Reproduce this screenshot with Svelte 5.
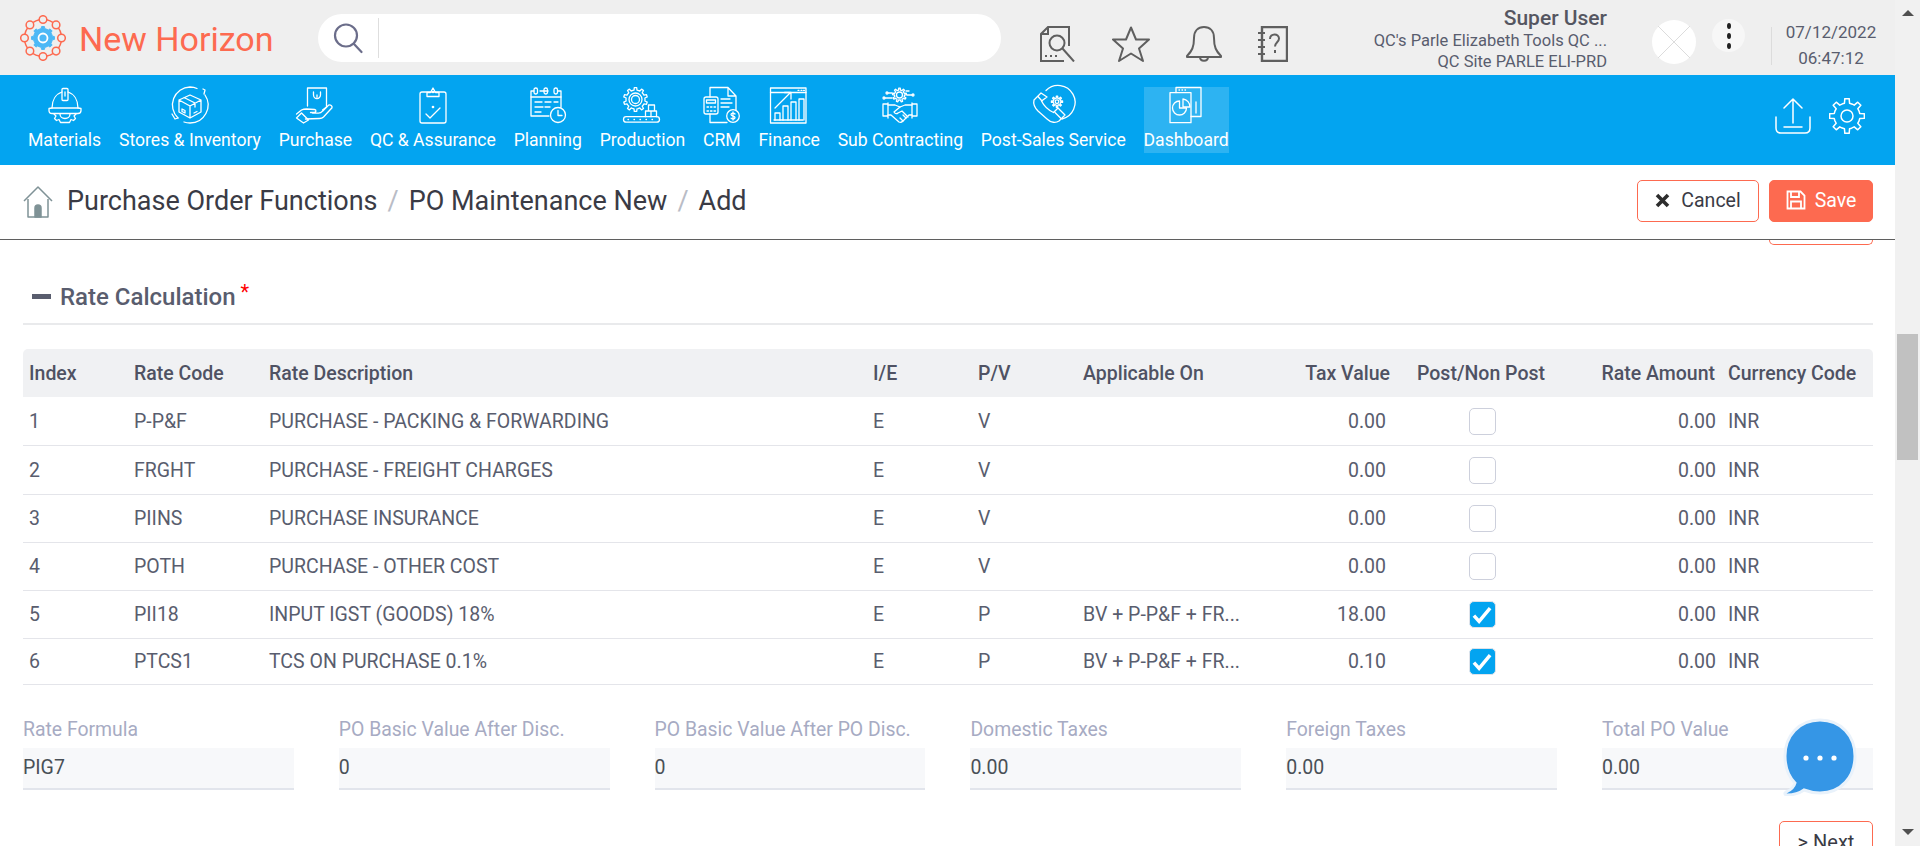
<script>
  function gear(cx, cy, r1, r2, n) {
    let d = '';
    const step = (Math.PI * 2) / n;
    for (let i = 0; i < n; i++) {
      const a = i * step - Math.PI / 2;
      const w = step / 4.4;
      const pts = [
        [r1, a - step / 2 + w * 0.2],
        [r1, a - w * 1.1],
        [r2, a - w * 0.7],
        [r2, a + w * 0.7],
        [r1, a + w * 1.1]
      ];
      pts.forEach(([r, t], j) => {
        d += (i === 0 && j === 0 ? 'M' : 'L') + (cx + r * Math.cos(t)).toFixed(2) + ' ' + (cy + r * Math.sin(t)).toFixed(2) + ' ';
      });
    }
    return d + 'Z';
  }

  const nav = [
    { label: 'Materials', svg: `<path d="M9 21C9 13 13 7 19 5M25 5c6 2 10 8 10 16"/><rect x="19" y="1.500" width="6" height="12" rx="1"/><path d="M22 5v4"/><path d="M6 21.500l3-.5h26l3 .5v2c0 2-1 3-3 3H9c-2 0-3-1-3-3z"/><path d="M11 27l2 2-1.500 2.500 2 2 2.500-1 1.500 3h9l1.500-3 2.500 1 2-2-1.500-2.500 2-2"/><path d="M17 27a5 4.500 0 0 0 10 0"/>` },
    { label: 'Stores & Inventory', svg: `<path d="M10 31A18 18 0 0 1 22 0c3 0 5 .5 7 1.500M37 8a18 18 0 0 1-15 28c-2 0-4-.3-6-1"/><path d="M35 2l2 1-1 4M4 27l3 5 3-1"/><path d="M22 8l11 5v12l-11 6-11-6V13zM11 13l11 6 11-6M22 19v12M16 10.500l11 5.500v4"/><path d="M14 22l3 1.500v2.500l-3-1.500zM26 26l3-1.500"/>` },
    { label: 'Purchase', svg: `<g transform="translate(-2.500 0)"><path d="M17 19V1h19v19l-4 3"/><path d="M23 5v3a3.500 3.500 0 0 0 7 0V5M26.500 8v2"/><path d="M6 27l5-4c2-1 3-1 5-1l8 .5c2 .2 2 3-.5 3H20M22 26l6 .2c2 0 3-.7 4-2l6-6c2-1 4 1 3.500 2.500L33 30c-1 1-2 1.500-4 1.500l-14 .5"/><path d="M6 31l5-5 7 7-5 3z"/></g>` },
    { label: 'QC & Assurance', svg: `<rect x="9" y="5" width="26" height="31" rx="2"/><path d="M16 9.500V5.500h3.500L22 1l2.500 4.500H28v4z"/><circle cx="22" cy="5" r=".6"/><path d="M15 27l4 4 10-10"/><circle cx="22" cy="20" r=".7"/>` },
    { label: 'Planning', svg: `<path d="M14 4h8M8 4H5v25h18"/><path d="M32 4h3v16"/><rect x="8" y="1" width="3.500" height="6" rx="1.700"/><rect x="18" y="1" width="3.500" height="6" rx="1.700"/><rect x="28" y="1" width="3.500" height="6" rx="1.700"/><path d="M5 10h30M9 15h7M19 15h6M28 15h4M9 20h8M19 20h5M9 25h6"/><circle cx="32" cy="28" r="7.500"/><path d="M32 23.500v5h4"/>` },
    { label: 'Production', svg: `<path d="${gear(15.500, 12.500, 9.500, 12, 10)}"/><circle cx="15.500" cy="12.500" r="6.500"/><circle cx="15.500" cy="12.500" r="4"/><rect x="3.500" y="29.700" width="36" height="5.500" rx="2.700"/><path d="M8 32.500h.5M14 32.500h.5M20 32.500h.5M26 32.500h.5M32 32.500h.5"/><path d="M25.500 29.700V24h5.500v5.700M31 29.700V24h5.500v5.700M28.500 24v-6h6v6"/>` },
    { label: 'CRM', svg: `<path d="M10 10V0.500h18L36 9v14M28 .5V9h8M10 27v8.500h17"/><rect x="4" y="10" width="14" height="17" rx="2"/><path d="M6.500 13h9v3h-9zM7 20h1.500M10.500 20h1.500M14 20h1.500M7 24h1.500M10.500 24h1.500M14 24h1.500"/><path d="M21 12h9M21 16h11M21 20h8"/><circle cx="33" cy="29" r="6.300"/><path d="M35 27c-1-1.300-4-1.300-4 .6 0 1.900 4 1 4 3 0 1.800-3 1.800-4 .6M33 25v8"/>` },
    { label: 'Finance', svg: `<rect x="3.500" y="1" width="35.500" height="35"/><path d="M3.500 5.500h35.500M31 3.300h1M34 3.300h1M36.500 3.300h1M7 33h29"/><path d="M8 33v-7h5v7M16 33V19h5v14M24 33V15h5v18M32 33V12h5v21"/><path d="M8 21l15-15M17.500 5.500H24V12"/>` },
    { label: 'Sub Contracting', svg: `<path d="${gear(21.500, 8, 5, 7, 9)}"/><circle cx="21.500" cy="8" r="3"/><path d="M14 6H10M14 11H7M29 8h5M28 4h3"/><circle cx="9" cy="6" r="1"/><circle cx="6" cy="11" r="1"/><circle cx="35" cy="8" r="1"/><path d="M5 17v12M10 16v15M5 17h5M5 29h5M34 16v15M39 17v12M34 17h5M34 29h5"/><path d="M10 18h7l5 2 5-2h7M10 28h3l8 7c2 1 3 0 4-1l6-6h3"/><path d="M22 20l-6 5c1 2 3 2 4 1l4-2 6 6M25 28l3 3M22 31l3 3"/>` },
    { label: 'Post-Sales Service', svg: `<path d="M15 3.500A17 17 0 1 1 31 32"/><path d="M10 6L3 13C2 17 4 21 7 24L16 32C20 36 25 36 28 34L34 28 27 21 22.500 25.500C17 23 13 19 10.500 14L16 10Z"/><path d="M7 9.500L11 14M24 25.500l6 6"/><path d="${gear(26, 14.700, 3.600, 5.600, 8)}"/><circle cx="26" cy="14.700" r="1.800"/>` },
    { label: 'Dashboard', active: true, svg: `<path d="M12 5.500V.5h25v29h-10"/><path d="M15 3h.5M18 3h.5M21 3h.5"/><rect x="6" y="5.700" width="21" height="30"/><path d="M15.500 14a7 7 0 1 0 7 7h-7z"/><path d="M19 12a8 8 0 0 1 7 8h-7z"/><path d="M32 15v11"/>` }
  ];

  const rows = [
    ['1', 'P-P&F', 'PURCHASE - PACKING & FORWARDING', 'E', 'V', '', '0.00', false],
    ['2', 'FRGHT', 'PURCHASE - FREIGHT CHARGES', 'E', 'V', '', '0.00', false],
    ['3', 'PIINS', 'PURCHASE INSURANCE', 'E', 'V', '', '0.00', false],
    ['4', 'POTH', 'PURCHASE - OTHER COST', 'E', 'V', '', '0.00', false],
    ['5', 'PII18', 'INPUT IGST (GOODS) 18%', 'E', 'P', 'BV + P-P&F + FR...', '18.00', true],
    ['6', 'PTCS1', 'TCS ON PURCHASE 0.1%', 'E', 'P', 'BV + P-P&F + FR...', '0.10', true]
  ];

  const fields = [
    ['Rate Formula', 'PIG7'],
    ['PO Basic Value After Disc.', '0'],
    ['PO Basic Value After PO Disc.', '0'],
    ['Domestic Taxes', '0.00'],
    ['Foreign Taxes', '0.00'],
    ['Total PO Value', '0.00']
  ];

  const logoDots = Array.from({ length: 8 }, (_, i) => {
    const a = (i * Math.PI) / 4;
    return [23 + 18.500 * Math.cos(a), 23 + 18.500 * Math.sin(a)];
  });
</script>

<div class="app">
  <div class="main">
    <header class="top">
      <svg class="logo" width="46" height="46" viewBox="0 0 46 46">
        <circle cx="23" cy="23" r="18.500" fill="none" stroke="#fd6a50" stroke-width="1.500" />
        {#each logoDots as [x, y]}
          <circle cx={x} cy={y} r="3.800" fill="#efefef" stroke="#fd6a50" stroke-width="1.500" />
        {/each}
        <path d={gear(23, 23, 9.500, 11.500, 8)} fill="#4cb8f6" stroke="#4cb8f6" stroke-linejoin="round" />
        <circle cx="23" cy="23" r="4.500" fill="#4cb8f6" stroke="#fff" stroke-width="1.800" />
      </svg>
      <div class="brand">New Horizon</div>
      <div class="search">
        <svg width="32" height="32" viewBox="0 0 32 32" fill="none" stroke="#6b6d8a" stroke-width="2.200" stroke-linecap="round">
          <circle cx="14" cy="13.500" r="11" />
          <path d="M22 22l7.500 8" />
        </svg>
        <span class="search-div"></span>
      </div>
      <div class="tools">
        <svg width="36" height="36" viewBox="0 0 36 36" fill="none" stroke="#5f5f5f" stroke-width="2">
          <path d="M29 20V1H8L1 8v27h23" />
          <path d="M8 1v7H1" />
          <circle cx="17" cy="17" r="7.500" />
          <path d="M22.500 22.500L34 35.500" />
          <path d="M5 30h2M10 30h2M15 30h2" />
        </svg>
        <svg width="38" height="36" viewBox="0 0 38 36" fill="none" stroke="#5f5f5f" stroke-width="2" stroke-linejoin="round">
          <path d="M19 1.500l5 12h13l-10 9 4 12.500-12-7.500L7 35l4-12.500-10-9h13z" />
        </svg>
        <svg width="36" height="36" viewBox="0 0 36 36" fill="none" stroke="#5f5f5f" stroke-width="2" stroke-linejoin="round">
          <path d="M18 1c-6 0-10 4-10 11 0 9-2 13-7 18v1h34v-1c-5-5-7-9-7-18 0-7-4-11-10-11z" />
          <path d="M14 31c0 5 8 5 8 0" />
        </svg>
        <svg width="30" height="36" viewBox="0 0 30 36" fill="none" stroke="#5f5f5f" stroke-width="2">
          <path d="M4 1h25v34H4z" stroke-width="2.400" />
          <path d="M0 7h7M0 14h7M0 21h7M0 28h7" />
          <path d="M12 13c0-6 9-6 9-.5 0 3.500-4 4-4 8M17 24v3" />
        </svg>
      </div>
      <div class="user">
        <div class="uname">Super User</div>
        <div class="uorg">QC's Parle Elizabeth Tools QC ...</div>
        <div class="uorg">QC Site PARLE ELI-PRD</div>
      </div>
      <div class="avatar">
        <svg width="44" height="44" viewBox="0 0 44 44" fill="none" stroke="#dcdcdc">
          <path d="M6 6l32 32M38 6L6 38" />
        </svg>
      </div>
      <div class="dots"><i></i><i></i><i></i></div>
      <span class="vdiv"></span>
      <div class="clock">
        <div>07/12/2022</div>
        <div>06:47:12</div>
      </div>
    </header>

    <nav class="nav">
      {#each nav as item}
        <div class="nav-item" class:active={item.active}>
          <svg class="nav-icon" width="44" height="36" viewBox="0 0 44 36" fill="none" stroke="#fff" stroke-width="1.300" stroke-linecap="round" stroke-linejoin="round">
            {@html item.svg}
          </svg>
          <span>{item.label}</span>
        </div>
      {/each}
      <div class="nav-right">
        <svg width="36" height="36" viewBox="0 0 36 36" fill="none" stroke="#fff" stroke-width="1.500" stroke-linecap="round" stroke-linejoin="round">
          <path d="M18 25V2M9 10l9-9 9 9" />
          <path d="M1 19v11c0 3 2 5 5 5h24c3 0 5-2 5-5V19" />
          <path d="M9 29h18" />
        </svg>
        <svg width="36" height="36" viewBox="0 0 36 36" fill="none" stroke="#fff" stroke-width="1.500" stroke-linejoin="round">
          <path d={gear(18, 18, 13, 17.500, 8)} />
          <circle cx="18" cy="18" r="6" />
        </svg>
      </div>
    </nav>

    <div class="crumbs">
      <svg width="32" height="32" viewBox="0 0 32 32" fill="none" stroke="#7f9296" stroke-width="1.500" stroke-linejoin="round">
        <path d="M2 15L16 1l14 14" />
        <path d="M6 13v18h20V13" />
        <path d="M13 31v-9a3 3 0 0 1 6 0v9z" fill="#7f9296" />
      </svg>
      <span class="crumb">Purchase Order Functions</span>
      <span class="sep">/</span>
      <span class="crumb">PO Maintenance New</span>
      <span class="sep">/</span>
      <span class="crumb">Add</span>
      <div class="actions">
        <button class="btn ghost">
          <svg width="15" height="15" viewBox="0 0 15 15" stroke="#2d2d2d" stroke-width="3.600">
            <path d="M2 2l11 11M13 2L2 13" />
          </svg>
          Cancel
        </button>
        <button class="btn solid">
          <svg width="20" height="20" viewBox="0 0 20 20" fill="none" stroke="#fff" stroke-width="1.800">
            <path d="M1.500 1.500h13l4 4v13h-17z" />
            <path d="M5 1.500v5.500h8V1.500M5 18.500v-7h10v7" />
          </svg>
          Save
        </button>
      </div>
    </div>

    <section class="content">
      <div class="stub"></div>
      <h2 class="section"><span class="dash"></span>Rate Calculation<sup>*</sup></h2>

      <table>
        <colgroup>
          <col style="width:105px" /><col style="width:135px" /><col style="width:604px" /><col style="width:105px" /><col style="width:105px" />
          <col style="width:168px" /><col style="width:152px" /><col style="width:170px" /><col style="width:155px" /><col style="width:151px" />
        </colgroup>
        <thead>
          <tr>
            <th>Index</th><th>Rate Code</th><th>Rate Description</th><th>I/E</th><th>P/V</th><th>Applicable On</th>
            <th class="r">Tax Value</th><th class="c">Post/Non Post</th><th class="r">Rate Amount</th><th>Currency Code</th>
          </tr>
        </thead>
        <tbody>
          {#each rows as r}
            <tr>
              <td>{r[0]}</td><td>{r[1]}</td><td>{r[2]}</td><td>{r[3]}</td><td>{r[4]}</td><td>{r[5]}</td>
              <td class="r v">{r[6]}</td>
              <td class="c">
                <span class="check" class:on={r[7]}>
                  {#if r[7]}
                    <svg width="22" height="20" viewBox="0 0 19 17" fill="none" stroke="#fff" stroke-width="3"><path d="M2.500 9l4.500 5 9.500-11.500" /></svg>
                  {/if}
                </span>
              </td>
              <td class="r v">0.00</td>
              <td>INR</td>
            </tr>
          {/each}
        </tbody>
      </table>

      <div class="fields">
        {#each fields as [label, value]}
          <div class="field">
            <div class="flabel">{label}</div>
            <div class="fvalue">{value}</div>
          </div>
        {/each}
      </div>

      <div class="next-row">
        <button class="btn ghost next">&gt; Next</button>
      </div>
    </section>

    <svg class="chat" width="76" height="78" viewBox="0 0 76 78">
      <path d="M38 2C17 2 3 18 3 38c0 12 4 21 10 27-1 4-4 7-9 9-2 1-1 3 1 3 7 0 13-2 17-5 5 2 10 3 16 3 21 0 35-16 35-37C73 18 59 2 38 2z" fill="#3596e6" stroke="#e9f2fb" stroke-width="3" />
      <circle cx="24" cy="40" r="2.600" fill="#fff" /><circle cx="38" cy="40" r="2.600" fill="#fff" /><circle cx="52" cy="40" r="2.600" fill="#fff" />
    </svg>
  </div>

  <div class="scrollbar">
    <span class="arrow up"></span>
    <div class="track"><div class="thumb"></div></div>
    <span class="arrow down"></span>
  </div>
</div>

<style>
  :global(body) {
    margin: 0;
    font-family: Roboto, "Liberation Sans", sans-serif;
    background: #fff;
  }
  .app {
    display: flex;
    width: 1920px;
    height: 846px;
    overflow: hidden;
  }
  .main {
    position: relative;
    width: 1895px;
    flex: none;
    overflow: hidden;
  }
  .top {
    display: flex;
    align-items: flex-start;
    height: 75px;
    background: #efefef;
    padding-left: 20px;
    box-sizing: border-box;
  }
  .logo { margin-top: 15px; flex: none; }
  .brand {
    margin-left: 13px;
    width: 193px;
    font-size: 34px;
    line-height: 75px;
    padding-top: 2px;
    color: #fd6a50;
    white-space: nowrap;
  }
  .search {
    margin: 14px 0 0 46px;
    width: 683px;
    height: 48px;
    border-radius: 24px;
    background: #fff;
    display: flex;
    align-items: center;
    padding-left: 14px;
    box-sizing: border-box;
  }
  .search-div { width: 1px; height: 40px; background: #dedede; margin-left: 14px; }
  .tools {
    margin: 26px 0 0 39px;
    display: flex;
    gap: 36px;
  }
  .user {
    width: 319px;
    text-align: right;
    color: #595d6e;
    padding-top: 6px;
    white-space: nowrap;
  }
  .uname { font-size: 21px; font-weight: 500; line-height: 25px; color: #555661; }
  .uorg { font-size: 16.500px; line-height: 20.500px; }
  .avatar {
    margin: 20px 0 0 45px;
    width: 44px;
    height: 44px;
    border-radius: 50%;
    background: #fff;
    flex: none;
  }
  .dots {
    margin: 19px 0 0 16px;
    width: 33px;
    height: 33px;
    border-radius: 50%;
    background: #f7f7f7;
    display: flex;
    flex-direction: column;
    align-items: center;
    justify-content: center;
    gap: 4px;
    flex: none;
  }
  .dots i { width: 4px; height: 6px; border-radius: 50%; background: #222; }
  .vdiv { margin: 27px 0 0 26px; width: 1px; height: 38px; background: #dcdcdc; }
  .clock {
    flex: 1;
    text-align: center;
    font-size: 17px;
    line-height: 26px;
    color: #595d6e;
    padding: 19px 5px 0 0;
  }
  .nav {
    display: flex;
    height: 90px;
    background: #03a4f0;
    padding: 12px 30px 0 28px;
    box-sizing: border-box;
    gap: 17.750px;
  }
  .nav-item {
    display: flex;
    flex-direction: column;
    align-items: center;
    height: 66px;
    color: #fff;
    font-size: 17.600px;
    white-space: nowrap;
  }
  .nav-item.active { background: rgba(255, 255, 255, 0.17); }
  .nav-item span { line-height: 24px; margin-top: 5px; }
  .nav-icon { flex: none; margin: 0 -4px; overflow: visible; }
  .nav-right {
    margin-left: auto;
    display: flex;
    gap: 18px;
    padding-top: 11px;
  }
  .crumbs {
    display: flex;
    align-items: center;
    height: 75px;
    padding: 0 22px 2px 22px;
    box-sizing: border-box;
    border-bottom: 1px solid #5f5f5f;
    background: #fff;
  }
  .crumb { font-size: 27px; color: #3a3b45; white-space: nowrap; }
  .crumbs > svg { margin-right: 13px; margin-top: 2px; }
  .sep { font-size: 27px; color: #b9bcc6; margin: 0 10px; }
  .actions { margin-left: auto; display: flex; gap: 10px; }
  .btn {
    font-family: inherit;
    font-size: 19.500px;
    height: 42px;
    border-radius: 5px;
    display: inline-flex;
    align-items: center;
    justify-content: center;
    gap: 11px;
    box-sizing: border-box;
    padding: 0 0 2px;
  }
  .ghost { background: #fff; border: 1px solid #fd6a50; color: #3a3b45; width: 122px; }
  .solid { background: #fd6a50; border: 1px solid #fd6a50; color: #fff; width: 104px; gap: 9px; }
  .content { padding: 0 22px 0 23px; background: #fff; }
  .stub {
    margin-left: auto;
    width: 104px;
    height: 5px;
    border: 1px solid #fd6a50;
    border-top: 0;
    border-radius: 0 0 5px 5px;
    box-sizing: border-box;
  }
  .section {
    display: flex;
    align-items: center;
    margin: 0;
    height: 80px;
    border-bottom: 2px solid #e9eaec;
    box-sizing: border-box;
    padding: 28px 0 3px 9px;
    font-size: 24px;
    font-weight: 500;
    color: #595d6e;
  }
  .dash { width: 19px; height: 5px; background: #595d6e; margin-right: 9px; }
  .section sup { color: #f00; font-size: 20px; line-height: 1; margin: -10px 0 0 5px; font-weight: 400; }
  table {
    table-layout: fixed;
    width: 1850px;
    border-collapse: separate;
    border-spacing: 0;
    margin-top: 24px;
    font-size: 19.500px;
    color: #595d6e;
  }
  th {
    height: 48px;
    background: #f0f1f3;
    font-weight: 500;
    text-align: left;
    padding: 0 6px;
    color: #4f5263;
    white-space: nowrap;
    overflow: visible;
  }
  th:first-child { border-radius: 5px 0 0 0; }
  th:last-child { border-radius: 0 5px 0 0; }
  td {
    height: 48px;
    padding: 0 6px;
    border-bottom: 1px solid #e4e5ea;
    box-sizing: border-box;
    white-space: nowrap;
  }
  tbody tr:nth-child(1) td, tbody tr:nth-child(2) td { height: 49px; }
  tbody tr:last-child td { height: 46px; }
  .r { text-align: right; }
  .v { padding-right: 11px; }
  .r:not(.v) { padding-right: 7px; }
  td.v:nth-child(9) { padding-right: 6px; }
  th:nth-child(9) { padding-right: 4px; }
  th.c { padding-right: 8px; }
  .c { text-align: center; }
  .check {
    display: inline-flex;
    align-items: center;
    justify-content: center;
    width: 27px;
    height: 27px;
    border: 1.500px solid #cdd0dc;
    border-radius: 5px;
    box-sizing: border-box;
    vertical-align: middle;
    background: #fff;
  }
  .check.on { background: #03a4f0; border-color: #dfe3ea; }
  .fields {
    display: grid;
    grid-template-columns: repeat(6, 270.800px);
    column-gap: 45px;
    margin-top: 32px;
  }
  .flabel { font-size: 19.400px; line-height: 26px; color: #a7abc3; white-space: nowrap; }
  .fvalue {
    height: 42px;
    margin-top: 5px;
    background: #f7f8fa;
    border-bottom: 2px solid #e2e5ec;
    box-sizing: border-box;
    font-size: 19.500px;
    line-height: 40px;
    color: #495057;
  }
  .next-row { display: flex; justify-content: flex-end; margin-top: 31px; }
  .next { width: 94px; height: 42px; font-size: 20px; gap: 0; padding-top: 2px; }
  .chat { position: absolute; left: 1782px; top: 718px; }
  .scrollbar {
    width: 25px;
    background: #f1f1f1;
    display: flex;
    flex-direction: column;
    align-items: center;
    height: 846px;
  }
  .arrow { width: 0; height: 0; border-left: 6px solid transparent; border-right: 6px solid transparent; flex: none; }
  .arrow.up { border-bottom: 6px solid #505050; margin: 10px 0 9px; }
  .arrow.down { border-top: 6px solid #505050; margin: 9px 0 11px; }
  .track { flex: 1; width: 100%; position: relative; }
  .thumb { margin: 309px 2px 0; height: 126px; background: #c1c1c1; }
</style>
